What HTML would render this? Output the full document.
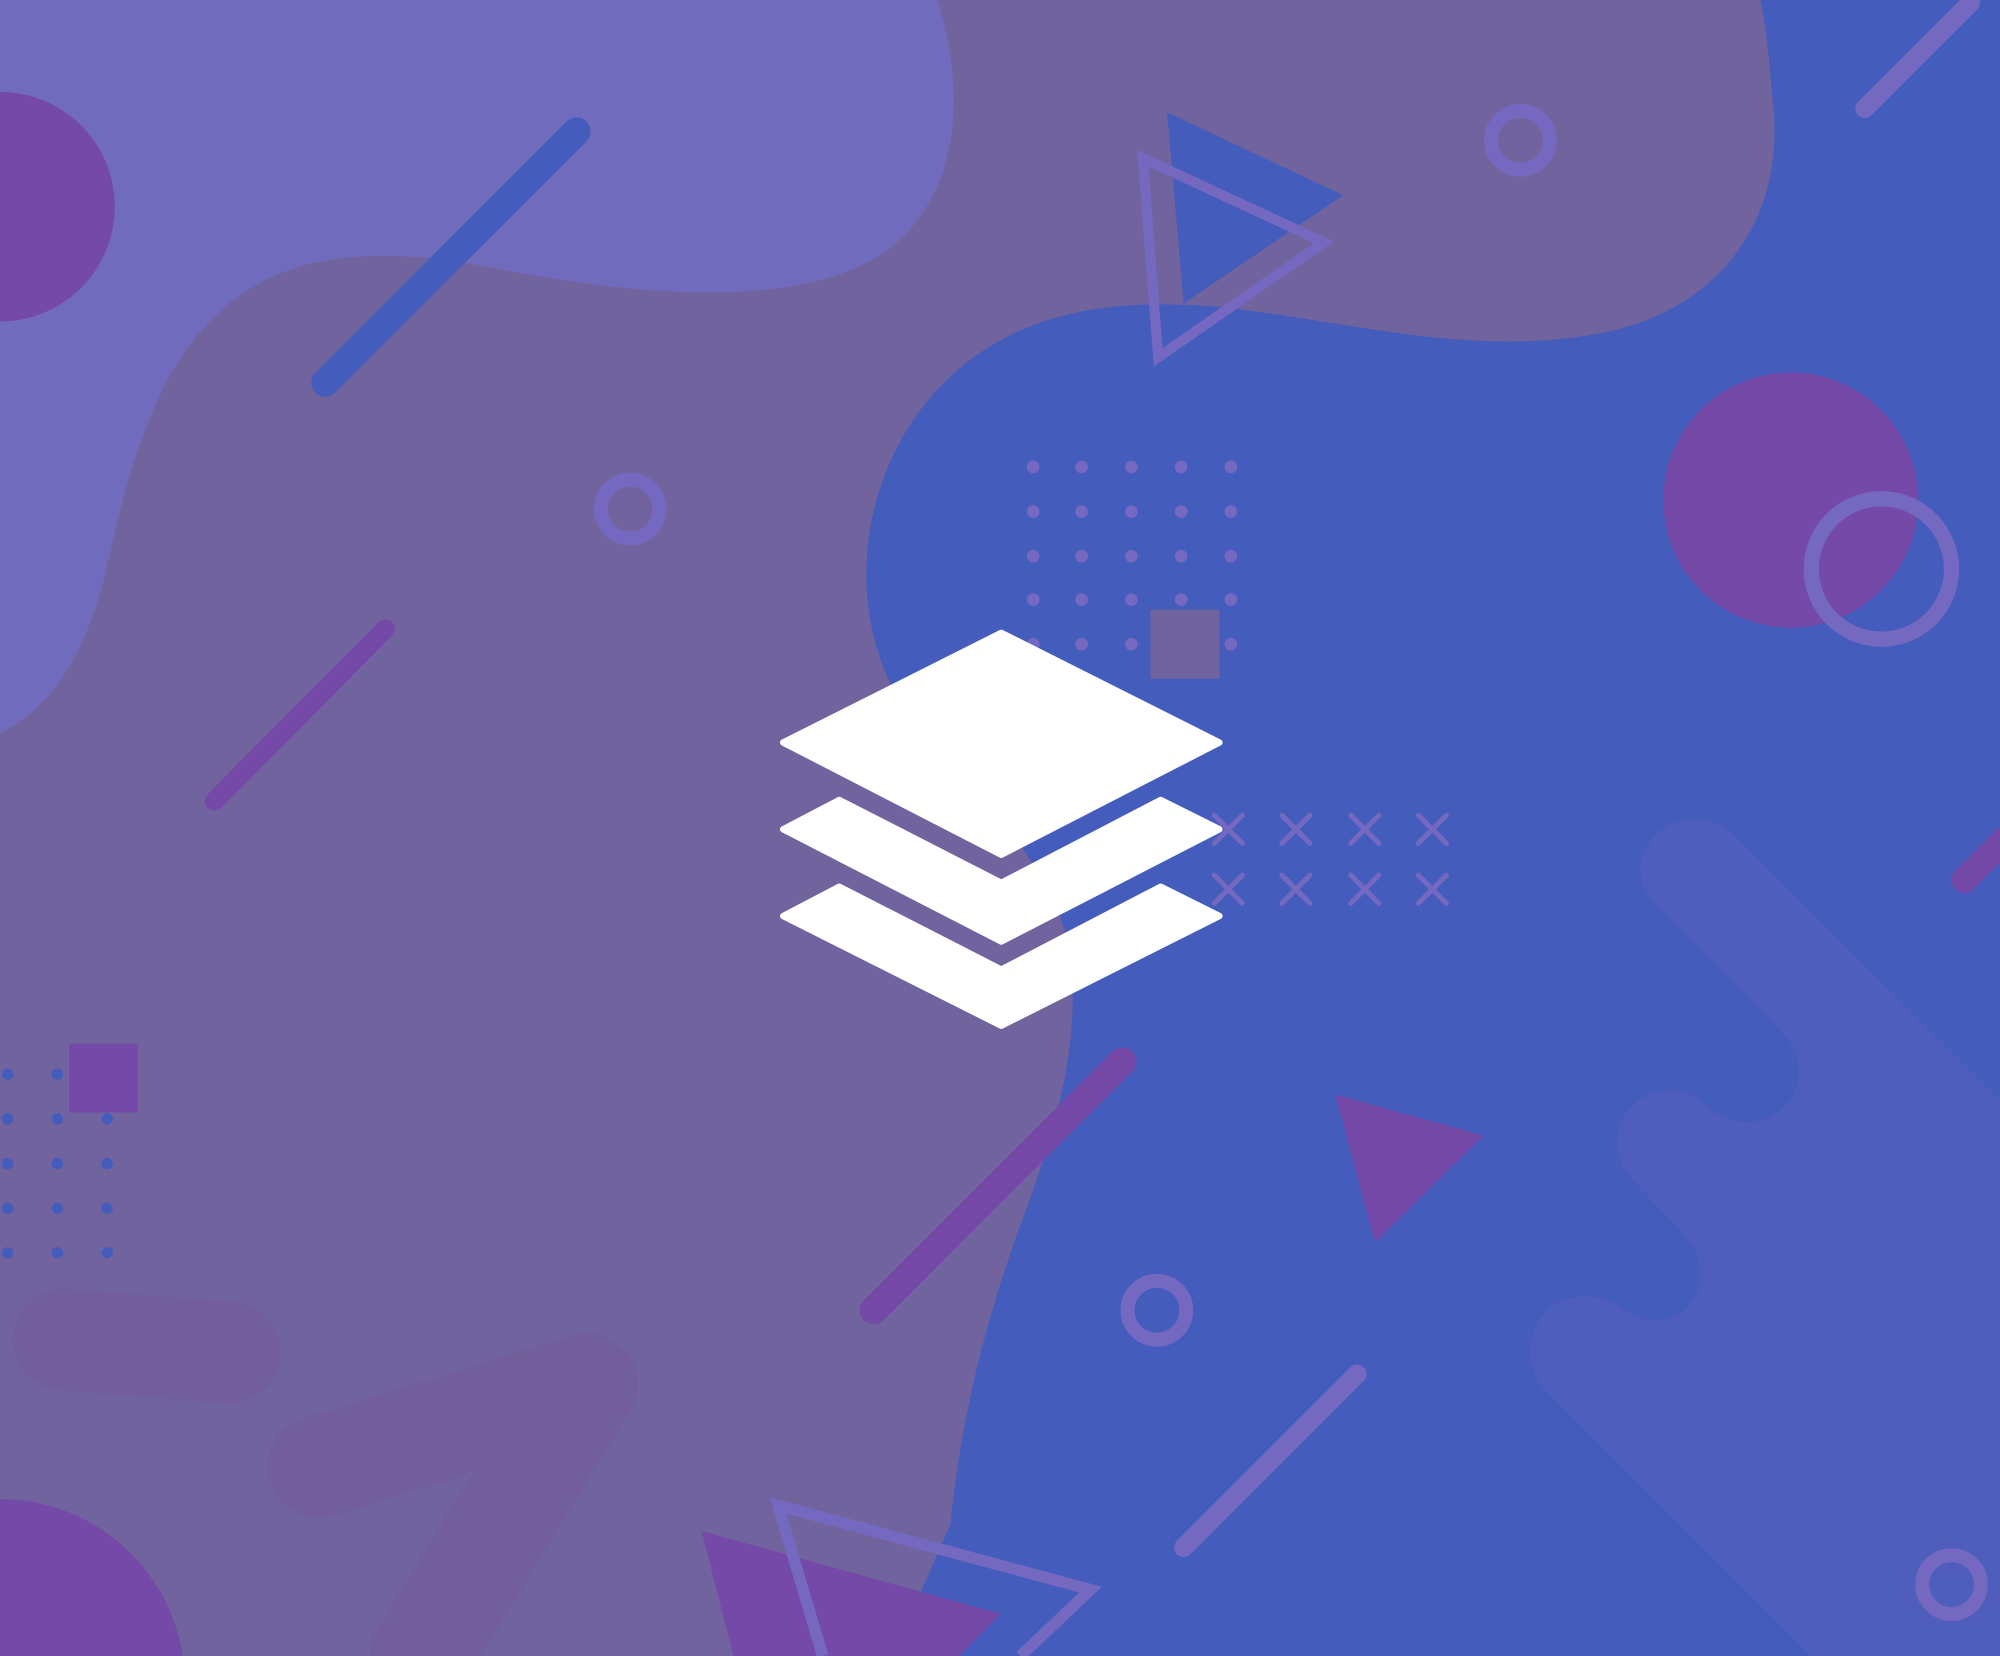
<!DOCTYPE html>
<html><head><meta charset="utf-8"><style>html,body{margin:0;padding:0;width:2000px;height:1656px;overflow:hidden;background:#71649e}svg{display:block}</style></head>
<body>
<svg width="2000" height="1656" viewBox="0 0 1568 1298" preserveAspectRatio="none" xmlns="http://www.w3.org/2000/svg">
<rect width="1568" height="1298" fill="#71649e"/>
<g stroke="#735e9c" stroke-linecap="round" fill="none" stroke-width="80">
<line x1="180" y1="1060" x2="50" y2="1050"/>
<line x1="460" y1="1085" x2="250" y2="1150"/>
<line x1="460" y1="1085" x2="330" y2="1298"/>
</g>
<path d="M0,0 H735 C760,80 750,160 690,200 C610,250 460,225 360,205 C250,190 180,210 130,300 C100,360 90,420 80,460 C60,530 30,560 0,575 Z" fill="#716bbd"/>
<path d="M1380,0 H1568 V1298 H700 L745,1195 C755,1100 775,1030 800,960 C830,880 845,820 840,760 C835,680 760,620 700,540 C660,460 680,360 740,300 C800,240 880,235 950,240 C1050,250 1150,280 1250,262 C1350,245 1400,170 1390,80 C1387,50 1385,20 1380,0 Z" fill="#445cbb"/>
<path d="M1330,642 C1345,642 1355,650 1360,655 L1568,862 V1298 H1420 L1210,1088 C1190,1065 1200,1025 1230,1018 C1250,1013 1265,1020 1275,1028 C1300,1045 1335,1030 1333,995 C1332,985 1328,975 1320,967 L1280,925 C1260,905 1265,868 1295,857 C1315,850 1330,860 1345,872 C1370,890 1410,875 1410,840 C1410,825 1403,815 1395,807 L1295,705 C1275,685 1290,642 1330,642 Z" fill="#4f5ebd"/>
<circle cx="0" cy="162" r="90" fill="#7549a8"/>
<circle cx="1404" cy="392" r="100" fill="#7549a8"/>
<circle cx="0" cy="1320" r="145" fill="#7549a8"/>
<circle cx="1475" cy="446" r="55" fill="none" stroke="#7468c0" stroke-width="12"/>
<g fill="none" stroke="#7468c0" stroke-width="11">
<circle cx="1192" cy="110" r="23"/><circle cx="494" cy="399" r="23"/><circle cx="907" cy="1027" r="23"/><circle cx="1530" cy="1242" r="23"/>
</g>
<g stroke-linecap="round">
<line x1="255" y1="300" x2="452" y2="103" stroke="#445cbb" stroke-width="22"/>
<line x1="168" y1="628" x2="302" y2="493" stroke="#7549a8" stroke-width="15"/>
<line x1="685" y1="1027" x2="880" y2="832" stroke="#7549a8" stroke-width="22"/>
<line x1="928" y1="1213" x2="1064" y2="1077" stroke="#7468c0" stroke-width="15"/>
<line x1="1462" y1="85" x2="1545" y2="2" stroke="#7468c0" stroke-width="15"/>
<line x1="1540" y1="690" x2="1580" y2="650" stroke="#7549a8" stroke-width="20"/>
</g>
<polygon points="915,88 1053,153 928,238" fill="#445cbb"/>
<polygon points="896,124 1038,190 908,280" fill="none" stroke="#7468c0" stroke-width="8"/>
<polygon points="1047,858 1163,890 1078,974" fill="#7549a8"/>
<polygon points="550,1200 785,1265 752,1298 575,1298" fill="#7549a8"/>
<polyline points="645,1298 610,1180 855,1246 800,1298" fill="none" stroke="#7468c0" stroke-width="9"/>
<g fill="#7468c0">
<g id="r"><circle cx="810" cy="366" r="5"/><circle cx="848" cy="366" r="5"/><circle cx="887" cy="366" r="5"/><circle cx="926" cy="366" r="5"/><circle cx="965" cy="366" r="5"/></g>
<use href="#r" y="35"/><use href="#r" y="70"/><use href="#r" y="104"/><use href="#r" y="139"/>
</g>
<rect x="902" y="478" width="54" height="54" fill="#71649e"/>
<g fill="#445cbb">
<g id="l"><circle cx="6" cy="842" r="4.5"/><circle cx="45" cy="842" r="4.5"/><circle cx="84" cy="842" r="4.5"/></g>
<use href="#l" y="35"/><use href="#l" y="70"/><use href="#l" y="105"/><use href="#l" y="140"/>
</g>
<rect x="54" y="818" width="54" height="54" fill="#7549a8"/>
<g stroke="#7468c0" stroke-width="4" stroke-linecap="round">
<path id="x" d="M952,639 l22,22 M974,639 l-22,22"/>
<use href="#x" x="53"/><use href="#x" x="107"/><use href="#x" x="160"/>
<use href="#x" y="47"/><use href="#x" x="53" y="47"/><use href="#x" x="107" y="47"/><use href="#x" x="160" y="47"/>
</g>
<g fill="#fff" stroke="#fff" stroke-width="5" stroke-linejoin="round">
<polygon points="785,496 956,582 785,670 614,582"/>
<polygon points="614,650 658,627 785,692 910,627 956,650 785,738"/>
<polygon points="614,718 658,695 785,760 910,695 956,718 785,804"/>
</g>
</svg>
</body></html>
